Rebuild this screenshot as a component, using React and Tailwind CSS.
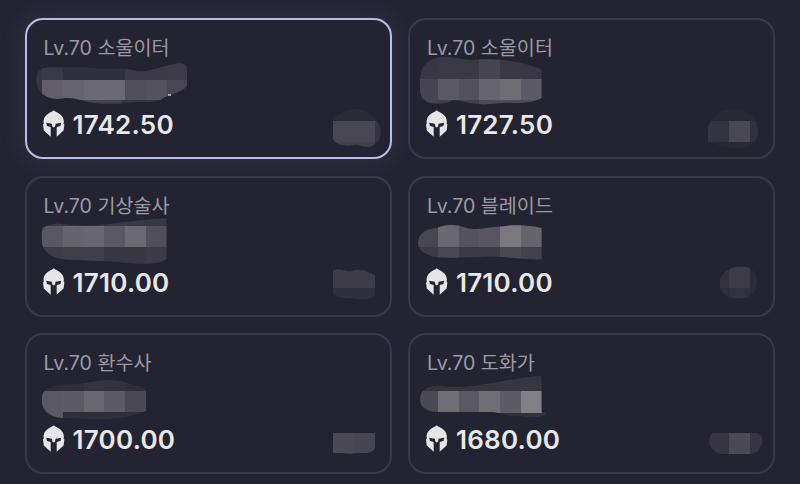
import React from "react";

// Each mosaic is a free-form outline filled with cells: [x, y, w, h, colour].
const cards = [
  {
    x: 25, y: 18, job: "소울이터", score: "1742.50", active: true,
    blobs: [
      {
        base: "#353441",
        path: "M36 80C36 72 40 67.500 50 67.500H84C96 69 110 69 125 69L140 71.500C150 71.500 160 67 172 64.500C181 62 187 64 187 68V85C187 89 178 92 164 97.500C158 103 148 102 135 102C120 104 102 104 88 102C78 99 70 97 62 98.500C48 101 36 92 36 80Z",
        cells: [[41.5, 67, 21, 13, "#3a3946"], [62.5, 60, 62.5, 20, "#302f3c"], [125, 60, 42, 20, "#3c3a47"], [167, 60, 21, 20, "#3d3b48"], [41.5, 79.7, 21, 20.5, "#625f69"], [62.5, 79.7, 21, 20.5, "#66646c"], [83.5, 79.7, 41.5, 20.5, "#6b6971"], [125, 79.7, 21, 20.5, "#514f5a"], [146, 79.7, 21, 20.5, "#54525c"], [167, 79.7, 21, 20.5, "#484652"], [62, 100.2, 60, 5, "#444250"]],
        dot: [168, 94.2],
      },
      {
        base: "#2b2a37",
        path: "M333 121C338 113 348 109 358 109C370 110 381 121 380.500 133C381 141 374 147 367 147C360 147 360 144 354 145C342 148 333 142 333 138Z",
        cells: [[333, 121, 42, 21, "#484652"], [375, 121, 8, 21, "#363542"], [333, 142, 42, 6, "#403e4a"]],
      },
    ],
  },
  {
    x: 408, y: 18, job: "소울이터", score: "1727.50",
    blobs: [
      {
        base: "#393744",
        path: "M420 84C419 65 429 57.500 443 57C458 57 460 60 473 60C490 58 505 60 517 62C528 64 541.500 69 541.500 70V98C537 101 528 103 512 103C500 102 492 105 480 104C470 104 461 100 453 100C447 104 438 104 431 103C423 101 419 96 420 84Z",
        cells: [[418, 79, 20, 26, "#474551"], [437.5, 55, 42, 24, "#3b3946"], [479, 55, 21, 24, "#474551"], [500, 55, 21, 24, "#3a3845"], [437.5, 79, 21, 21, "#5a5862"], [458.5, 79, 20.5, 21, "#53515c"], [479, 79, 21, 21, "#66646c"], [500, 79, 21, 21, "#6f6d74"], [521, 79, 21, 21, "#5c5a64"], [437, 100, 42, 6, "#403e4a"], [479, 100, 63, 6, "#4c4a55"]],
      },
      {
        base: "#292835",
        path: "M708 127C713 115 720 110 735 109C749 110 758 119 758 131C758 143 749 147 739 149C725 148 715 144 708 142Z",
        cells: [[708, 121, 21, 21, "#343340"], [729, 121, 21, 21, "#494752"], [750, 121, 8, 21, "#302f3c"]],
      },
    ],
  },
  {
    x: 25, y: 175.5, job: "기상술사", score: "1710.00",
    blobs: [
      {
        base: "#393744",
        path: "M41.500 232C42 226 47 224 57 223C75 225 90 226 105 224C120 222 145 219 166.500 217.500V258C163 264 138 264 124 262C105 260 80 260 67 259C49 258 42 249 41.500 240Z",
        cells: [[41.5, 225, 21, 21, "#595761"], [62.5, 225, 21, 21, "#65636b"], [83.5, 225, 20.5, 21, "#686670"], [104, 225, 21, 21, "#5a5862"], [125, 225, 21, 21, "#6b6971"], [146, 225, 21, 21, "#514f5a"], [41.5, 246, 21, 20, "#3d3b47"], [62.5, 246, 42, 20, "#403e4b"], [104, 246, 42, 20, "#393744"], [146, 246, 21, 20, "#3c3a47"]],
      },
      {
        base: "#302f3c",
        path: "M333 270C340 267 344 271 351 271C358 268 367 270 375 275V294C371 300 362 300 354 298C344 298 337 297 333 294Z",
        cells: [[333, 267, 42, 20.5, "#3e3c49"]],
      },
    ],
  },
  {
    x: 408, y: 175.5, job: "블레이드", score: "1710.00",
    blobs: [
      {
        base: "#3c3a46",
        path: "M418 242C419 232 427 228 436 228C443 224 455 223 465 227C475 231 490 226 502 226C512 224 528 224 541.500 227.500V259C530 259 512 257 495 256C476 256 460 258 448 257C430 258 418 252 418 242Z",
        cells: [[418, 225, 20, 21, "#484651"], [437.5, 222, 21, 24, "#696770"], [458.5, 225, 20.5, 21, "#54525c"], [479, 225, 21, 21, "#595661"], [500, 222, 21, 24, "#7a787e"], [521, 222, 21, 24, "#65636b"], [437.5, 246, 21, 14, "#484651"], [500, 246, 21, 14, "#494752"], [521, 246, 21, 14, "#43414d"]],
      },
      {
        base: "#2d2c39",
        path: "M720 284C719 273 730 266 741 266C751 266 757 272 757 281C757 292 750 298 739 298C728 298 720 293 720 284Z",
        cells: [[720, 265, 9, 22.5, "#32313d"], [729, 265, 21, 22.5, "#3d3b47"], [729, 287.5, 21, 12, "#32313e"]],
      },
    ],
  },
  {
    x: 25, y: 333, job: "환수사", score: "1700.00",
    blobs: [
      {
        base: "#2f2e3b",
        path: "M41.500 399C42 389 50 386 61 385C78 385 93 381 108 380C122 380 133 385 146 389V411C130 418 110 420 94 419C82 419 73 418 62 418C48 417 41.500 409 41.500 399Z",
        cells: [[83.5, 375, 42, 16, "#33323e"], [41.5, 391, 21, 26.5, "#5a5862"], [62.5, 391, 21, 21, "#5d5b65"], [83.5, 391, 21, 21, "#696770"], [104, 391, 21, 21, "#5c5a64"], [125, 391, 21, 21, "#4a4853"]],
      },
      {
        base: "#474551",
        path: "M333 433H375V448C373 453 367 453 361 453C350 454 340 453 333 453Z",
        cells: [[333, 433, 21, 21, "#4b4954"]],
      },
    ],
  },
  {
    x: 408, y: 333, job: "도화가", score: "1680.00",
    blobs: [
      {
        base: "#373542",
        path: "M420 399C421 387 432 385 441 386C455 388 469 387 480 385C500 382 520 377 541.500 376V412L546 413C544 417 534 418 522 416C508 417 500 413 494 412H437C424 411 420 406 420 399Z",
        cells: [[418, 391, 20, 21.5, "#4b4954"], [437.5, 391, 21, 21.5, "#706e75"], [458.5, 391, 20.5, 21.5, "#5a5862"], [479, 391, 21, 21.5, "#716f76"], [500, 391, 21, 21.5, "#5d5b65"], [521, 391, 20.5, 21.5, "#828086"], [492, 412.5, 60, 6, "#32313e"]],
      },
      {
        base: "#363541",
        path: "M713 433H757C762 434 763 439 762 443C760 450 756 454 749 454H722C715 453 709 447 709 441C709 437 711 434 713 433Z",
        cells: [[729, 432, 21, 22, "#4b4954"]],
      },
    ],
  },
];

function Helmet() {
  return (
    <svg className="h-[27px] w-[22px] shrink-0" viewBox="0 0 22 27" fill="#e6e6e8">
      <path d="M10.700 .2C12 1.600 14.500 2.300 17 4.200C19.800 6.400 20.900 9 20.900 12L20.500 13.400L21.400 14.500L20.600 20.500L13.700 26.800V17L17.400 16L18.200 12.800L12.600 13.800L12.200 16L11.500 17.200H9.900L9.200 16L8.800 13.800L3.200 12.800L4 16L7.700 17V26.800L.8 20.500L0 14.500L.9 13.400L.5 12C.5 9 1.600 6.400 4.400 4.200C6.900 2.300 9.400 1.600 10.700 .2Z" />
    </svg>
  );
}

function Mosaic({ id, blob }) {
  return (
    <g>
      <clipPath id={id}>
        <path d={blob.path} />
      </clipPath>
      <path d={blob.path} fill={blob.base} />
      <g clipPath={`url(#${id})`} shapeRendering="crispEdges">
        {blob.cells.map(([x, y, w, h, fill], i) => (
          <rect key={i} x={x} y={y} width={w} height={h} fill={fill} />
        ))}
      </g>
      {blob.dot && <rect x={blob.dot[0]} y={blob.dot[1]} width="3" height="1.5" fill="#c5c5cc" />}
    </g>
  );
}

function Card({ card, index }) {
  return (
    <div
      className={
        "relative h-[141px] rounded-[18px] border-2 pl-[16px] pt-[16px] " +
        (card.active
          ? "border-[#b6bfe8] shadow-[0_0_24px_2px_rgba(140,160,220,0.12)] bg-[#242331]"
          : "border-[#333a4a]")
      }
    >
      <div className="flex h-[24px] items-center whitespace-nowrap pl-[0.5px] text-[19.6px] leading-[24px] text-[#9b9aa4]">
        Lv.70 {card.job}
      </div>
      <div className="h-[36px]" />
      <div className="flex h-[56px] items-start gap-[7.500px] pt-[14px]">
        <Helmet />
        <span className="text-[26px] font-semibold leading-[29px] tracking-[0.25px] text-[#e8e8ea]">{card.score}</span>
      </div>
      <svg
        className="absolute -left-[2px] -top-[2px] h-[141px] w-[367px] overflow-visible"
        viewBox={`${card.x} ${card.y} 367 141`}
      >
        {card.blobs.map((blob, i) => (
          <Mosaic key={i} id={`mosaic-${index}-${i}`} blob={blob} />
        ))}
      </svg>
    </div>
  );
}

export default function App() {
  return (
    <main className="h-[484px] w-[800px] overflow-hidden bg-[#242331] pl-[25px] pt-[18px] font-['Inter','Noto_Sans_CJK_KR',sans-serif]">
      <div className="grid grid-cols-[367px_367px] gap-x-[16.400px] gap-y-[16.500px]">
        {cards.map((card, i) => (
          <Card key={i} card={card} index={i} />
        ))}
      </div>
    </main>
  );
}
